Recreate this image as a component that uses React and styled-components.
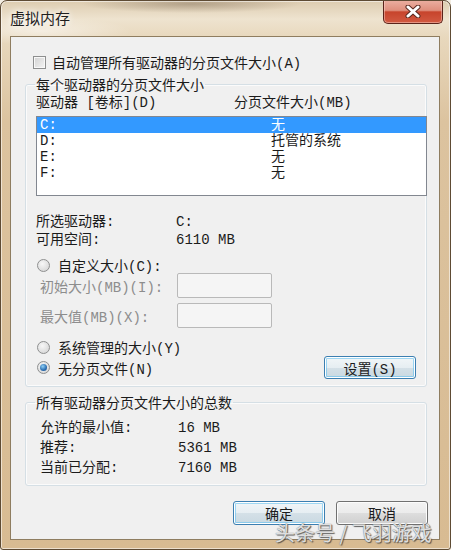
import styled, { createGlobalStyle } from "styled-components";

const GlobalStyle = createGlobalStyle`
  html, body {
    margin: 0;
    padding: 0;
    background: #f3ede2;
  }
  body {
    font-family: "Liberation Mono", "Noto Sans CJK SC", monospace;
    font-size: 14px;
    color: #1b1b1b;
  }
  * { box-sizing: border-box; }
`;

const drives = [
  { name: "C:", size: "无", selected: true },
  { name: "D:", size: "托管的系统" },
  { name: "E:", size: "无" },
  { name: "F:", size: "无" },
];

const totals = [
  { label: "允许的最小值:", value: "16 MB" },
  { label: "推荐:", value: "5361 MB" },
  { label: "当前已分配:", value: "7160 MB" },
];

const CloseIcon = () => (
  <svg width="16" height="13" viewBox="0 0 16 13">
    <path d="M3 2 L13 11 M13 2 L3 11" stroke="#5a2a20" strokeWidth="5" strokeLinecap="round" />
    <path d="M3 2 L13 11 M13 2 L3 11" stroke="#ffffff" strokeWidth="3" strokeLinecap="round" />
  </svg>
);

const App = () => {
  return (
    <>
      <GlobalStyle />
      <Window>
        <TitleBar>
          <Title>虚拟内存</Title>
          <CloseButton><CloseIcon /></CloseButton>
        </TitleBar>
        <Client>
          <CheckRow>
            <CheckBox />
            <span>自动管理所有驱动器的分页文件大小(A)</span>
          </CheckRow>

          <Group $top={6} $bottom={7}>
            <Legend>每个驱动器的分页文件大小</Legend>
            <HeaderRow>
              <span>驱动器 [卷标](D)</span>
              <span>分页文件大小(MB)</span>
            </HeaderRow>
            <ListBox>
              {drives.map((d) => (
                <ListRow key={d.name} $selected={d.selected}>
                  <span>{d.name}</span>
                  <span>{d.size}</span>
                </ListRow>
              ))}
            </ListBox>
            <InfoRow style={{ marginTop: 18 }}>
              <span>所选驱动器:</span>
              <span>C:</span>
            </InfoRow>
            <InfoRow style={{ marginTop: 2 }}>
              <span>可用空间:</span>
              <span>6110 MB</span>
            </InfoRow>
            <RadioRow $top={9}>
              <Radio />
              <span>自定义大小(C):</span>
            </RadioRow>
            <FieldRow>
              <span>初始大小(MB)(I):</span>
              <TextBox />
            </FieldRow>
            <FieldRow $top={5}>
              <span>最大值(MB)(X):</span>
              <TextBox />
            </FieldRow>
            <RadioRow $top={11}>
              <Radio />
              <span>系统管理的大小(Y)</span>
            </RadioRow>
            <LastRow>
              <RadioRow>
                <Radio $checked />
                <span>无分页文件(N)</span>
              </RadioRow>
              <Button $default $width={92} $height={23} style={{ marginRight: 10 }}>
                设置(S)
              </Button>
            </LastRow>
          </Group>

          <Group $top={7} $bottom={7}>
            <Legend>所有驱动器分页文件大小的总数</Legend>
            <Totals>
              {totals.map((t) => (
                <TotalRow key={t.label}>
                  <span>{t.label}</span>
                  <span>{t.value}</span>
                </TotalRow>
              ))}
            </Totals>
          </Group>

          <ButtonBar>
            <Button $default $width={92} $height={24}>确定</Button>
            <Button $width={92} $height={24}>取消</Button>
          </ButtonBar>
        </Client>
        <Watermark>头条号 / 飞羽游戏</Watermark>
      </Window>
    </>
  );
};

const Window = styled.div`
  position: relative;
  width: 451px;
  height: 550px;
  display: flex;
  flex-direction: column;
  border: 1px solid #5e4b34;
  border-radius: 7px 7px 3px 3px;
  overflow: hidden;
  background:
    radial-gradient(ellipse 110px 9px at 190px 3px, rgba(95, 75, 55, 0.35), transparent),
    radial-gradient(ellipse 90px 14px at 40px 30px, rgba(255, 255, 255, 0.5), transparent),
    linear-gradient(180deg, #ddccb0 0%, #eee3cf 18px, #e8d8bd 36px, #dcc39f 120px, #d8bb92 100%);
  box-shadow: inset 0 0 0 1px rgba(255, 255, 255, 0.55);
`;

const TitleBar = styled.div`
  height: 35px;
  display: flex;
  align-items: flex-start;
  padding-left: 9px;
`;

const Title = styled.div`
  margin-top: 8px;
  font-family: "Noto Sans CJK SC", sans-serif;
  font-size: 15px;
  line-height: 18px;
  color: #1e1e1e;
  text-shadow: 0 0 6px rgba(255, 255, 255, 0.95), 0 0 10px rgba(255, 255, 255, 0.8);
`;

const CloseButton = styled.div`
  margin-left: auto;
  margin-right: 7px;
  margin-top: -1px;
  width: 60px;
  height: 24px;
  display: flex;
  align-items: center;
  justify-content: center;
  border: 1px solid #5a231a;
  border-top: none;
  border-radius: 0 0 5px 5px;
  background: linear-gradient(180deg, #ebb0a2 0%, #df8f7d 45%, #c7442c 52%, #d25a42 100%);
  box-shadow: inset 0 0 0 1px rgba(255, 220, 210, 0.45);
`;

const Client = styled.div`
  flex: 1;
  margin: 0 10px 9px 9px;
  display: flex;
  flex-direction: column;
  border: 1px solid #8f7d60;
  background: #f0f0f0;
`;

const CheckRow = styled.div`
  display: flex;
  align-items: center;
  height: 16px;
  margin-top: 17px;
  padding-left: 22px;
  gap: 6px;
`;

const CheckBox = styled.div`
  width: 13px;
  height: 13px;
  border: 1px solid #8e8f8f;
  background: linear-gradient(135deg, #d2d2d2, #f4f4f4);
  box-shadow: inset 0 0 0 1px #f8f8f8;
`;

const Group = styled.fieldset`
  margin: ${(p) => p.$top}px 12px 0 14px;
  padding: 0 0 ${(p) => p.$bottom}px 10px;
  min-width: 0;
  border: 1px solid #d5dfe5;
  border-radius: 3px;
  box-shadow: inset 0 0 0 1px #fbfbfb;
`;

const Legend = styled.legend`
  padding: 0 1px;
  margin-left: -1px;
  line-height: 16px;
  font-family: "Noto Sans CJK SC", sans-serif;
`;

const HeaderRow = styled.div`
  display: grid;
  grid-template-columns: 198px 1fr;
  line-height: 16px;
  margin-top: 3px;
`;

const ListBox = styled.div`
  margin-top: 5px;
  margin-right: -1px;
  height: 80px;
  border: 1px solid #828790;
  background: #ffffff;
`;

const ListRow = styled.div`
  display: grid;
  grid-template-columns: 231px 1fr;
  height: 16px;
  line-height: 16px;
  padding-left: 3px;
  background: ${(p) => (p.$selected ? "#3399ff" : "transparent")};
  color: ${(p) => (p.$selected ? "#ffffff" : "#1b1b1b")};
`;

const InfoRow = styled.div`
  display: grid;
  grid-template-columns: 140px 1fr;
  line-height: 16px;
`;

const RadioRow = styled.div`
  display: flex;
  align-items: center;
  gap: 8px;
  height: 16px;
  margin-top: ${(p) => p.$top || 0}px;
  padding-left: 1px;
`;

const Radio = styled.div`
  position: relative;
  width: 13px;
  height: 13px;
  border-radius: 50%;
  border: 1px solid #8e8f8f;
  background: radial-gradient(circle at 40% 35%, #f7f7f7, #d0d0d0);
  &::after {
    content: "";
    display: ${(p) => (p.$checked ? "block" : "none")};
    position: absolute;
    left: 2px;
    top: 2px;
    width: 7px;
    height: 7px;
    border-radius: 50%;
    background: radial-gradient(circle at 40% 35%, #8fd0f5, #2a6cb0 60%, #1a4d86);
  }
`;

const FieldRow = styled.div`
  display: grid;
  grid-template-columns: 137px 95px;
  align-items: center;
  height: 25px;
  margin-top: ${(p) => p.$top || 0}px;
  padding-left: 4px;
  color: #8d8d8d;
`;

const TextBox = styled.div`
  height: 25px;
  border: 1px solid #b9b9b9;
  border-radius: 2px;
  background: #f5f5f5;
`;

const LastRow = styled.div`
  display: flex;
  align-items: center;
  justify-content: space-between;
  margin-top: 1px;
`;

const Button = styled.div`
  width: ${(p) => p.$width}px;
  height: ${(p) => p.$height}px;
  display: flex;
  align-items: center;
  justify-content: center;
  border: 1px solid ${(p) => (p.$default ? "#3c7fb1" : "#707070")};
  border-radius: 3px;
  background: ${(p) =>
    p.$default
      ? "linear-gradient(180deg, #f2f6f8 0%, #e6eef2 50%, #d4e0e7 51%, #c9d9e2 100%)"
      : "linear-gradient(180deg, #f2f2f2 0%, #ebebeb 50%, #dddddd 51%, #cfcfcf 100%)"};
  box-shadow: ${(p) =>
    p.$default
      ? "inset 0 0 0 1px #fff, inset 0 0 0 2px rgba(90, 190, 240, 0.55)"
      : "inset 0 0 0 1px #fcfcfc"};
  font-family: "Liberation Mono", "Noto Sans CJK SC", monospace;
  color: #1b1b1b;
`;

const Totals = styled.div`
  margin-top: 8px;
  padding-left: 4px;
`;

const TotalRow = styled.div`
  display: grid;
  grid-template-columns: 138px 1fr;
  height: 20px;
  line-height: 20px;
`;

const ButtonBar = styled.div`
  display: flex;
  justify-content: flex-end;
  gap: 11px;
  margin-top: 15px;
  margin-right: 11px;
`;

const Watermark = styled.div`
  position: absolute;
  left: 274px;
  top: 520px;
  font-family: "Noto Sans CJK SC", sans-serif;
  font-size: 20px;
  line-height: 24px;
  color: rgba(240, 240, 240, 0.9);
  text-shadow: 0 0 1px #555, 1px 1px 1px rgba(60, 60, 60, 0.8);
  white-space: nowrap;
`;

export default App;
